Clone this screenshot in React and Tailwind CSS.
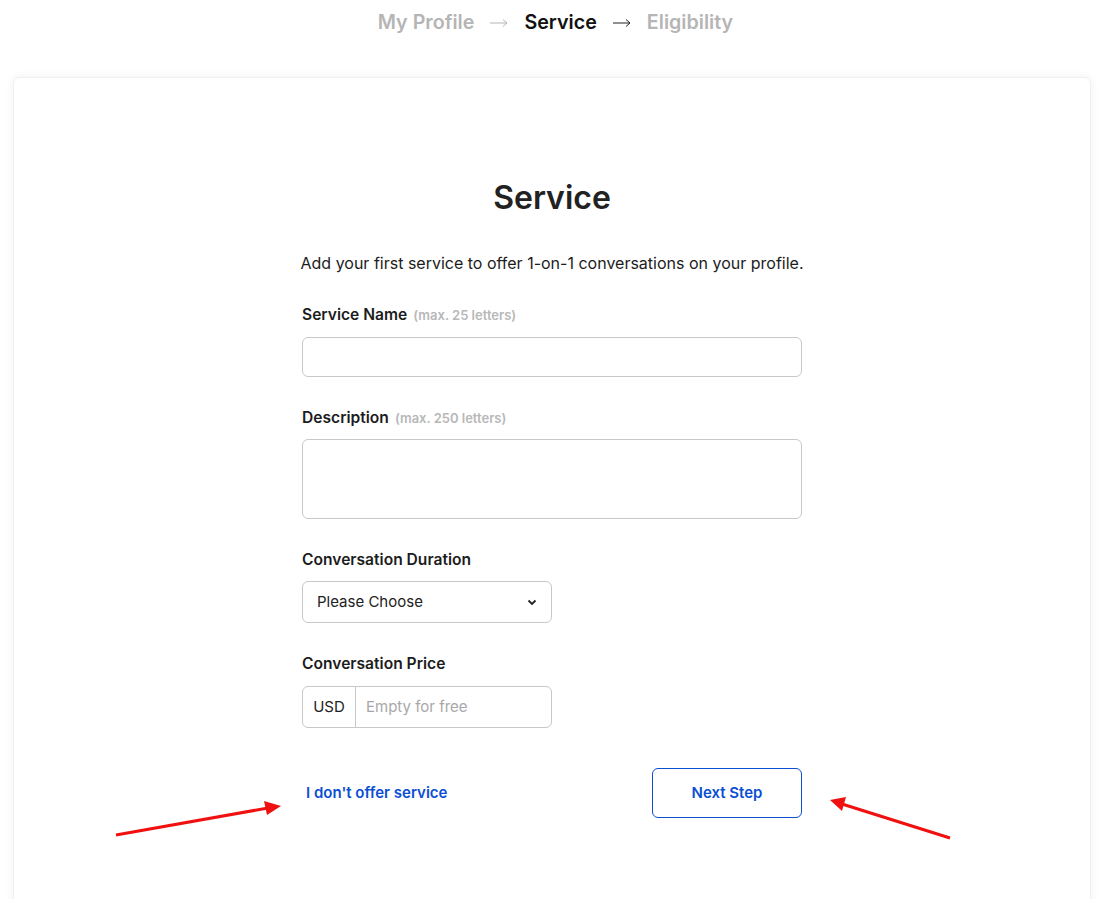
import React from 'react';

const Label = ({ children, hint }) => (
  <div className="flex items-baseline gap-[6px] text-[15.6px] font-semibold text-[#1c1c1c] leading-[20px]">
    <span>{children}</span>
    {hint && <span className="text-[13px] font-semibold text-[#b8b8b8]">{hint}</span>}
  </div>
);

const Arrow = () => (
  <svg width="18" height="10" viewBox="0 0 18 10" fill="none" stroke="currentColor" strokeWidth="1">
    <path d="M0 5h17M13 1.5l4 3.5-4 3.5" />
  </svg>
);

export default function App() {
  return (
    <div className="relative min-h-[899px] bg-white font-['Inter','Liberation_Sans',sans-serif] text-[#1c1c1c]">
      {/* breadcrumb */}
      <div className="flex h-[44px] pt-[2px] items-center justify-center gap-[16px] text-[19.7px] font-semibold">
        <span className="text-[#b5b5b5]">My Profile</span>
        <span className="text-[#b5b5b5]"><Arrow /></span>
        <span className="text-[#111]">Service</span>
        <span className="text-[#222]"><Arrow /></span>
        <span className="text-[#b5b5b5]">Eligibility</span>
      </div>

      <div className="ml-[13px] mt-[33px] w-[1078px] h-[840px] rounded-[6px] bg-white shadow-[0_0_10px_rgba(0,0,0,0.06)] border border-[#f0f0f0]">
        <div className="mx-auto w-[500px] pt-[100px]">
          <h1 className="text-center text-[32px] font-semibold leading-[40px] text-[#222]">Service</h1>
          <p className="mt-[34px] text-center text-[16px] leading-[22px] text-[#1c1c1c] whitespace-nowrap -mx-[4px]">
            Add your first service to offer 1-on-1 conversations on your profile.
          </p>

          <div className="mt-[31px]">
            <Label hint="(max. 25 letters)">Service Name</Label>
            <input className="mt-[12px] block h-[40px] w-full rounded-[6px] border border-[#c8c8c8] px-3 outline-none" />
          </div>

          <div className="mt-[31px]">
            <Label hint="(max. 250 letters)">Description</Label>
            <textarea className="mt-[11px] block h-[80px] w-full resize-none rounded-[6px] border border-[#c8c8c8] px-3 outline-none" />
          </div>

          <div className="mt-[31px]">
            <Label>Conversation Duration</Label>
            <div className="mt-[11px] flex h-[42px] w-[250px] items-center justify-between rounded-[6px] border border-[#c8c8c8] pl-[14px] pr-[14px] text-[15px] text-[#222]">
              <span>Please Choose</span>
              <svg width="10" height="10" viewBox="0 0 10 10" fill="none" stroke="#222" strokeWidth="1.8">
                <path d="M1.5 3.5l3.5 3.5 3.5-3.5" />
              </svg>
            </div>
          </div>

          <div className="mt-[31px]">
            <Label>Conversation Price</Label>
            <div className="mt-[12px] flex h-[42px] w-[250px] items-stretch rounded-[6px] border border-[#c8c8c8] text-[15px]">
              <span className="flex w-[53px] items-center justify-center border-r border-[#c8c8c8] text-[#222]">USD</span>
              <input placeholder="Empty for free" className="min-w-0 flex-1 bg-transparent px-[10px] outline-none placeholder:text-[#a8a8a8]" />
            </div>
          </div>

          <div className="mt-[40px] flex items-center justify-between">
            <button className="pl-[4px] text-[15px] font-semibold text-[#0b4fd3]">I don't offer service</button>
            <button className="h-[50px] w-[150px] rounded-[6px] border border-[#0b4fd3] text-[15px] font-semibold text-[#0b4fd3]">Next Step</button>
          </div>
        </div>
      </div>

      {/* annotation arrows */}
      <svg className="pointer-events-none absolute left-0 top-0" width="1111" height="899">
        <line x1="116" y1="835" x2="268" y2="808" stroke="#f01010" strokeWidth="3" />
        <polygon points="281,806 264,801 267,815" fill="#f01010" />
        <line x1="950" y1="838" x2="842" y2="804" stroke="#f01010" strokeWidth="3" />
        <polygon points="830,800 846,797 842,811" fill="#f01010" />
      </svg>
    </div>
  );
}
